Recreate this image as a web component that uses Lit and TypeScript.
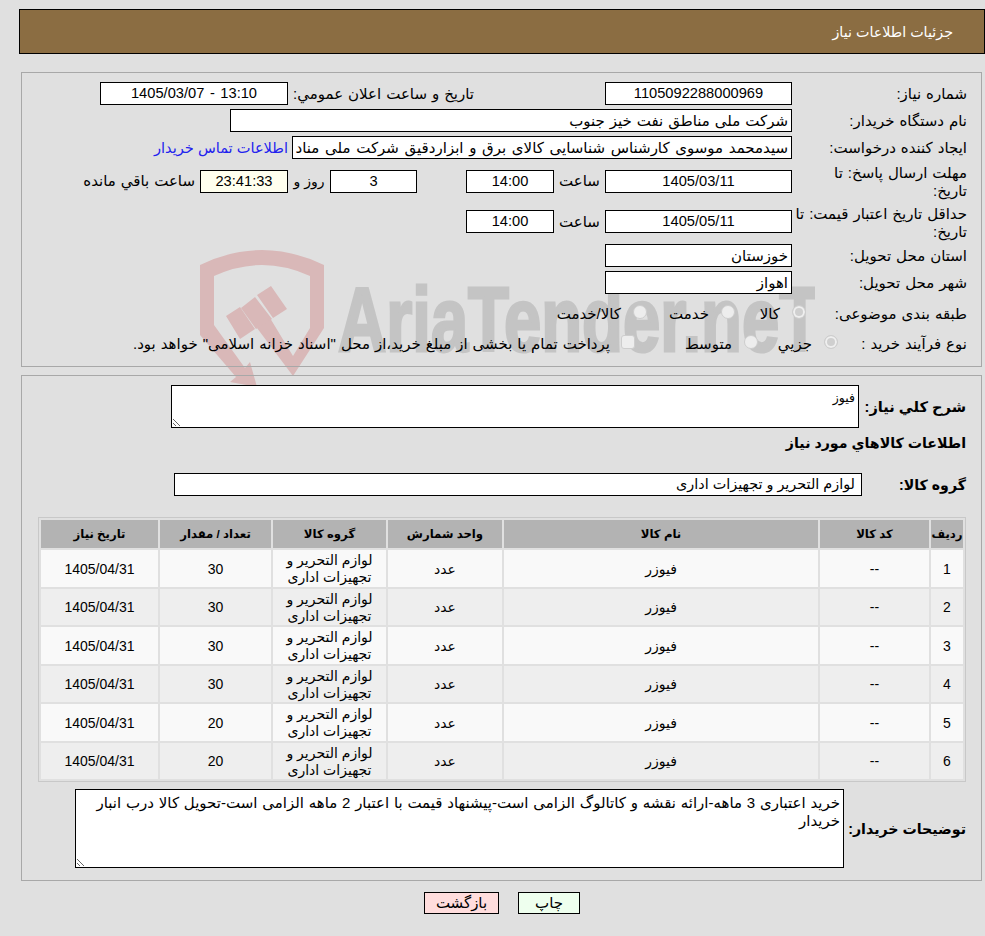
import { LitElement, html, css } from "lit";
import { customElement } from "lit/decorators.js";

const GOODS = [
  ["1", "30"], ["2", "30"], ["3", "30"], ["4", "30"], ["5", "20"], ["6", "20"],
];

@customElement("app-root")
export class AppRoot extends LitElement {
  static styles = css`
    :host {
      display: block;
      position: relative;
      isolation: isolate;
      min-height: 936px;
      overflow: hidden;
      background: #e0e0e0;
      color: #000;
      direction: rtl;
      font-family: "Liberation Sans", "DejaVu Sans", sans-serif;
      font-size: 15px;
      word-spacing: 0.8px;
    }
    .watermark { position: absolute; left: 195px; top: 235px; width: 620px; height: 160px; z-index: -1; direction: ltr; }
    .wm-shield { fill: #d9b8b8; }
    .wm-text { fill: #c4c4c4; stroke: #c4c4c4; stroke-width: 3px; font-family: "Liberation Sans", sans-serif; font-weight: 700; font-size: 91px; direction: ltr; word-spacing: 0; }

    .head {
      box-sizing: border-box;
      height: 45px;
      margin: 9px 0 18px 19px;
      padding-right: 31px;
      display: flex;
      align-items: center;
      background: #8b6d42;
      border: 1px solid #000;
      color: #fff;
      font-size: 14.3px;
      word-spacing: 0;
    }
    .panel { margin: 0 3px 8px 21px; border: 1px solid #a8a8a8; }
    .p1 { padding: 7px 14px 10px 0; }
    .p2 { padding: 9px 15px 12px 0; }

    .row { display: flex; align-items: center; height: 27px; white-space: nowrap; }
    .h40 { height: 40px; }
    .h41 { height: 41px; }
    .h35 { height: 35px; }
    .h25 { height: 25px; }
    .label { width: 175px; flex: none; line-height: 18px; }
    .tall { box-sizing: border-box; padding-top: 2px; }
    .l161 { width: 161px; }
    .l129 { width: 129px; }

    .box {
      box-sizing: border-box;
      flex: none;
      height: 23px;
      line-height: 21px;
      padding: 0 3px;
      background: #fff;
      border: 1px solid #000;
      overflow: hidden;
      white-space: nowrap;
    }
    .c { text-align: center; font-size: 14.67px; }
    .ltr { direction: ltr; word-spacing: 1.5px; }
    .w187 { width: 187px; }
    .w188 { width: 188px; }
    .w562 { width: 562px; }
    .w500 { width: 500px; word-spacing: 1.5px; }
    .w88 { width: 88px; }
    .w87 { width: 87px; }
    .yellow { background: #ffffee; }
    .pad131 { width: 317px; flex: none; padding-right: 131px; box-sizing: border-box; }
    .hour { width: 51px; flex: none; text-align: center; }
    .sp49 { width: 49px; flex: none; }
    .day { width: 42px; flex: none; text-align: center; font-size: 14px; word-spacing: 0; }
    .ms5 { margin-right: 5px; }
    .link { margin-right: 4px; color: #2222ee; font-size: 14.6px; word-spacing: 0; }

    .opt { display: flex; align-items: center; flex: none; }
    .o71 { width: 71px; }
    .o88 { width: 88px; }
    .o80 { width: 80px; }
    .o123 { width: 123px; }
    .mark { box-sizing: border-box; flex: none; width: 14px; height: 14px; border: 1px solid #cdcdcd; border-radius: 50%; background: #ededed; margin-left: 12px; position: relative; top: -2px; }
    .mark.on { background: #cfcfcf; box-shadow: inset 0 0 0 2px #efefef; }
    .mark.sq { border-radius: 3px; margin-left: 11px; }

    .b { font-weight: 700; font-size: 14.2px; word-spacing: 0; }
    .b146 { font-size: 14.6px; }
    .ta {
      box-sizing: border-box;
      flex: none;
      background: #fff;
      border: 1px solid #000;
      overflow: auto;
      resize: both;
      white-space: normal;
    }
    .ta1 { width: 688px; height: 43px; padding: 4px 3px; font-size: 12.5px; line-height: 16px; word-spacing: 0; }
    .ta2 { width: 769px; height: 79px; padding: 4px 3px 0 3px; line-height: 18px; word-spacing: 0.6px; }
    .r43 { height: 43px; }
    .r30 { height: 30px; }
    .r23 { height: 23px; margin-top: 15px; }
    .r79 { height: 79px; margin-top: 7px; }
    .w688 { width: 688px; padding-right: 6px; font-size: 14.4px; word-spacing: 0; }
    .l107 { width: 107px; flex: none; }
    .l104 { width: 104px; flex: none; }
    .l122 { width: 122px; flex: none; }

    .tw { margin: 21px 0 0 16px; border: 1px solid #c8c8c8; }
    table { width: 100%; table-layout: fixed; border-collapse: separate; border-spacing: 2px; font-size: 14px; word-spacing: 0; }
    th { height: 28px; padding: 0; background: #b3b3b3; font-size: 11.7px; font-weight: 700; }
    td { box-sizing: border-box; height: 36.5px; padding: 2px 0 0; text-align: center; line-height: 17px; background: #f9f9f9; }
    tr.alt td { background: #eee; }
    .k1 { width: 32px; }
    .k2 { width: 109px; }
    .k3 { width: 314px; }
    .k4 { width: 114px; }
    .k5 { width: 113px; }
    .k6 { width: 111px; }
    .k7 { width: 117px; }

    .actions { display: flex; justify-content: center; gap: 19px; padding-left: 19px; margin-top: 11px; }
    .btn { box-sizing: border-box; height: 22px; line-height: 20px; text-align: center; border: 1px solid #000; }
    .print { width: 62px; background: #eeffee; }
    .back { width: 75px; background: #ffdddd; }
  `;

  render() {
    return html`
      <svg class="watermark" viewBox="195 235 620 160" aria-hidden="true">
        <path class="wm-shield" d="M200 265Q262 235 324 265L324 328L293 376L257 328L270 318L293 356L310 328L310 276Q262 254 214 276L214 325L245 368L250 362L257 387L230 382L236 377L200 335Z"/>
        <path class="wm-shield" d="M226 316L240 307L255 329L240 339ZM241 308L255 297L272 319L256 329ZM257 295L271 286L287 309L273 318Z"/>
        <text class="wm-text" x="338" y="351" textLength="482" lengthAdjust="spacingAndGlyphs">AriaTender.neT</text>
      </svg>

      <div class="head">جزئیات اطلاعات نیاز</div>

      <section class="panel p1">
        <div class="row">
          <div class="label">شماره نیاز:</div>
          <div class="box c w187">1105092288000969</div>
          <div class="pad131">تاریخ و ساعت اعلان عمومي:</div>
          <div class="box c ltr w188">1405/03/07 - 13:10</div>
        </div>
        <div class="row">
          <div class="label">نام دستگاه خریدار:</div>
          <div class="box w562">شرکت ملی مناطق نفت خیز جنوب</div>
        </div>
        <div class="row">
          <div class="label">ایجاد کننده درخواست:</div>
          <div class="box w500">سیدمحمد موسوی کارشناس شناسایی کالای برق و ابزاردقیق شرکت ملی مناد</div>
          <div class="link">اطلاعات تماس خریدار</div>
        </div>
        <div class="row h40">
          <div class="label tall">مهلت ارسال پاسخ: تا<br />تاریخ:</div>
          <div class="box c w187">1405/03/11</div>
          <div class="hour">ساعت</div>
          <div class="box c w88">14:00</div>
          <div class="sp49"></div>
          <div class="box c w87">3</div>
          <div class="day">روز و</div>
          <div class="box c w88 yellow">23:41:33</div>
          <div class="ms5">ساعت باقي مانده</div>
        </div>
        <div class="row h41">
          <div class="label tall">حداقل تاریخ اعتبار قیمت: تا<br />تاریخ:</div>
          <div class="box c w187">1405/05/11</div>
          <div class="hour">ساعت</div>
          <div class="box c w88">14:00</div>
        </div>
        <div class="row">
          <div class="label">استان محل تحویل:</div>
          <div class="box w187">خوزستان</div>
        </div>
        <div class="row">
          <div class="label">شهر محل تحویل:</div>
          <div class="box w187">اهواز</div>
        </div>
        <div class="row h35">
          <div class="label l161">طبقه بندی موضوعی:</div>
          <div class="opt o71"><span class="mark on"></span>کالا</div>
          <div class="opt o88"><span class="mark"></span>خدمت</div>
          <div class="opt"><span class="mark"></span>کالا/خدمت</div>
        </div>
        <div class="row h25">
          <div class="label l129">نوع فرآیند خرید :</div>
          <div class="opt o80"><span class="mark on"></span>جزیي</div>
          <div class="opt o123"><span class="mark"></span>متوسط</div>
          <div class="opt"><span class="mark sq"></span>پرداخت تمام یا بخشی از مبلغ خرید،از محل "اسناد خزانه اسلامی" خواهد بود.</div>
        </div>
      </section>

      <section class="panel p2">
        <div class="row r43">
          <div class="b b146 l107">شرح كلي نياز:</div>
          <div class="ta ta1">فیوز</div>
        </div>
        <div class="row r30 b">اطلاعات كالاهاي مورد نياز</div>
        <div class="row r23">
          <div class="b l104">گروه کالا:</div>
          <div class="box w688">لوازم التحریر و تجهیزات اداری</div>
        </div>
        <div class="tw">
          <table>
            <thead>
              <tr>
                <th class="k1">رديف</th>
                <th class="k2">کد کالا</th>
                <th class="k3">نام کالا</th>
                <th class="k4">واحد شمارش</th>
                <th class="k5">گروه کالا</th>
                <th class="k6">تعداد / مقدار</th>
                <th class="k7">تاریخ نیاز</th>
              </tr>
            </thead>
            <tbody>
              ${GOODS.map(
                ([n, q], i) => html`
                  <tr class=${i % 2 ? "alt" : ""}>
                    <td>${n}</td>
                    <td>--</td>
                    <td>فیوزر</td>
                    <td>عدد</td>
                    <td>لوازم التحریر و<br />تجهیزات اداری</td>
                    <td>${q}</td>
                    <td>1405/04/31</td>
                  </tr>
                `
              )}
            </tbody>
          </table>
        </div>
        <div class="row r79">
          <div class="b l122">توضیحات خریدار:</div>
          <div class="ta ta2">خرید اعتباری 3 ماهه-ارائه نقشه و کاتالوگ الزامی است-پیشنهاد قیمت با اعتبار 2 ماهه الزامی است-تحویل کالا درب انبار خریدار</div>
        </div>
      </section>

      <div class="actions">
        <div class="btn print">چاپ</div>
        <div class="btn back">بازگشت</div>
      </div>
    `;
  }
}
